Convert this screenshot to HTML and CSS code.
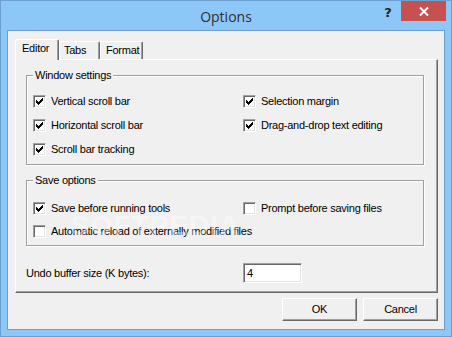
FILE: index.html
```html
<!DOCTYPE html>
<html>
<head>
<meta charset="utf-8">
<link rel="stylesheet" href="styles.css">
</head>
<body>
<div class="window">
  <div class="titlebar">
    <div class="spacer"></div>
    <div class="title">Options</div>
    <div class="controls">
      <div class="help">?</div>
      <div class="close">
        <svg width="10" height="9" viewBox="0 0 10 9"><path d="M1 0.5 L9 8.5 M9 0.5 L1 8.5" stroke="#fff" stroke-width="2" fill="none"/></svg>
      </div>
    </div>
  </div>
  <div class="client">
    <div class="tabs">
      <div class="tab active t-editor">Editor</div>
      <div class="tab t-tabs">Tabs</div>
      <div class="tab t-format">Format</div>
    </div>
    <div class="panel">
      <div class="group g1">
        <div class="group-label">Window settings</div>
        <div class="grid g1-grid">
          <div class="item"><span class="cb checked"><svg width="7" height="7" viewBox="0 0 7 7"><path d="M6 0h1v1h-1z M5 1h2v1h-2z M0 2h1v1h-1z M4 2h3v1h-3z M0 3h2v1h-2z M3 3h3v1h-3z M0 4h5v1h-5z M1 5h3v1h-3z M2 6h1v1h-1z" fill="#000"/></svg></span><span>Vertical scroll bar</span></div>
          <div class="item"><span class="cb checked"><svg width="7" height="7" viewBox="0 0 7 7"><path d="M6 0h1v1h-1z M5 1h2v1h-2z M0 2h1v1h-1z M4 2h3v1h-3z M0 3h2v1h-2z M3 3h3v1h-3z M0 4h5v1h-5z M1 5h3v1h-3z M2 6h1v1h-1z" fill="#000"/></svg></span><span>Selection margin</span></div>
          <div class="item"><span class="cb checked"><svg width="7" height="7" viewBox="0 0 7 7"><path d="M6 0h1v1h-1z M5 1h2v1h-2z M0 2h1v1h-1z M4 2h3v1h-3z M0 3h2v1h-2z M3 3h3v1h-3z M0 4h5v1h-5z M1 5h3v1h-3z M2 6h1v1h-1z" fill="#000"/></svg></span><span>Horizontal scroll bar</span></div>
          <div class="item"><span class="cb checked"><svg width="7" height="7" viewBox="0 0 7 7"><path d="M6 0h1v1h-1z M5 1h2v1h-2z M0 2h1v1h-1z M4 2h3v1h-3z M0 3h2v1h-2z M3 3h3v1h-3z M0 4h5v1h-5z M1 5h3v1h-3z M2 6h1v1h-1z" fill="#000"/></svg></span><span>Drag-and-drop text editing</span></div>
          <div class="item"><span class="cb checked"><svg width="7" height="7" viewBox="0 0 7 7"><path d="M6 0h1v1h-1z M5 1h2v1h-2z M0 2h1v1h-1z M4 2h3v1h-3z M0 3h2v1h-2z M3 3h3v1h-3z M0 4h5v1h-5z M1 5h3v1h-3z M2 6h1v1h-1z" fill="#000"/></svg></span><span>Scroll bar tracking</span></div>
        </div>
      </div>
      <div class="group g2">
        <div class="group-label">Save options</div>
        <div class="grid g2-grid">
          <div class="item"><span class="cb checked"><svg width="7" height="7" viewBox="0 0 7 7"><path d="M6 0h1v1h-1z M5 1h2v1h-2z M0 2h1v1h-1z M4 2h3v1h-3z M0 3h2v1h-2z M3 3h3v1h-3z M0 4h5v1h-5z M1 5h3v1h-3z M2 6h1v1h-1z" fill="#000"/></svg></span><span>Save before running tools</span></div>
          <div class="item"><span class="cb"></span><span>Prompt before saving files</span></div>
          <div class="item wide"><span class="cb"></span><span>Automatic reload of externally modified files</span></div>
        </div>
      </div>
      <div class="undo-row">
        <span class="undo-label">Undo buffer size (K bytes):</span>
        <div class="input">4</div>
      </div>
      <div class="watermark">SOFTPEDIA</div>
    </div>
    <div class="buttons">
      <div class="btn">OK</div>
      <div class="btn">Cancel</div>
    </div>
  </div>
</div>
</body>
</html>
```

FILE: styles.css
```css
* { box-sizing: border-box; }
html, body { margin: 0; padding: 0; }
body {
  font-family: "Liberation Sans", Arial, sans-serif;
  font-size: 11px;
  letter-spacing: -0.25px;
  color: #000;
  background: #8cc7f8;
}
.window {
  width: 452px;
  height: 337px;
  border: 1px solid #6d9fcf;
  background: #8cc7f8;
  display: flex;
  flex-direction: column;
}
.titlebar {
  height: 29px;
  display: grid;
  grid-template-columns: 76px 1fr 76px;
}
.title {
  display: flex;
  align-items: center;
  justify-content: center;
  font-family: "Open Sans", "Noto Sans", sans-serif;
  font-size: 14px;
  letter-spacing: 0;
  color: #303030;
  padding-top: 1px;
}
.controls {
  display: flex;
  align-items: flex-start;
}
.help {
  width: 26px;
  height: 20px;
  display: flex;
  align-items: center;
  justify-content: center;
  font-family: "DejaVu Sans", sans-serif;
  font-weight: bold;
  font-size: 13px;
  color: #222;
  padding-top: 3px;
}
.close {
  width: 45px;
  height: 20px;
  background: #c75050;
  display: flex;
  align-items: center;
  justify-content: center;
}
.client {
  margin: 0 6px;
  height: 300px;
  border: 1px solid #6f9ecd;
  background: #f0f0f0;
  padding: 8px 6px 0 7px;
  display: flex;
  flex-direction: column;
}
.tabs {
  height: 20px;
  display: flex;
  align-items: flex-end;
}
.tab {
  background: #f0f0f0;
  border-top: 1px solid #fff;
  border-left: 1px solid #fff;
  border-right: 1px solid #696969;
  box-shadow: inset -1px 0 0 #a0a0a0;
  border-radius: 2px 2px 0 0;
  line-height: 13px;
  padding-top: 2px;
}
.tab.active {
  height: 21px;
  margin-bottom: -1px;
  position: relative;
  z-index: 1;
}
.t-editor { width: 44px; padding-left: 6px; }
.t-tabs { width: 41px; height: 18px; padding-left: 4px; }
.t-format { width: 43px; height: 18px; padding-left: 5px; }
.panel {
  position: relative;
  width: 423px;
  height: 234px;
  border-top: 1px solid #fff;
  border-left: 1px solid #fff;
  border-right: 1px solid #696969;
  border-bottom: 1px solid #696969;
  box-shadow: inset -1px -1px 0 #a0a0a0;
  padding: 15px 13px 0 10px;
}
.group {
  border: 1px solid #a0a0a0;
  box-shadow: 1px 1px 0 #fff, inset 1px 1px 0 #fff;
}
.group-label {
  width: fit-content;
  margin: -7px 0 0 6px;
  padding: 0 2px;
  line-height: 13px;
  background: #f0f0f0;
}
.grid {
  display: grid;
  grid-template-columns: 210px 1fr;
  grid-auto-rows: 13px;
  padding-left: 6px;
}
.g1 { padding-bottom: 8px; }
.g1-grid { margin-top: 13px; row-gap: 11px; }
.g2 { margin-top: 15px; padding-bottom: 7px; }
.g2-grid { margin-top: 15px; row-gap: 10px; }
.item {
  display: flex;
  align-items: center;
  gap: 5px;
  line-height: 13px;
  white-space: nowrap;
}
.item.wide { grid-column: 1 / span 2; }
.cb {
  width: 13px;
  height: 13px;
  flex: none;
  background: #fff;
  border-top: 1px solid #a0a0a0;
  border-left: 1px solid #a0a0a0;
  border-bottom: 1px solid #fff;
  border-right: 1px solid #fff;
  box-shadow: inset 1px 1px 0 #696969, inset -1px -1px 0 #e3e3e3;
  display: flex;
  align-items: center;
  justify-content: center;
}
.cb svg { display: block; }
.undo-row {
  margin-top: 17px;
  display: flex;
  align-items: center;
  height: 20px;
}
.undo-label { width: 217px; }
.input {
  width: 59px;
  height: 20px;
  background: #fff;
  border-top: 1px solid #a0a0a0;
  border-left: 1px solid #a0a0a0;
  border-bottom: 1px solid #fff;
  border-right: 1px solid #fff;
  box-shadow: inset 1px 1px 0 #696969, inset -1px -1px 0 #e3e3e3;
  padding: 3px 0 0 3px;
  line-height: 13px;
}
.watermark {
  position: absolute;
  left: 55px;
  top: 150px;
  font-size: 28px;
  font-weight: bold;
  color: rgba(255, 255, 255, 0.4);
  letter-spacing: 1px;
  pointer-events: none;
}
.buttons {
  margin-top: 5px;
  display: flex;
  justify-content: flex-end;
  gap: 6px;
  width: 423px;
}
.btn {
  width: 75px;
  height: 23px;
  background: #f0f0f0;
  border-top: 1px solid #fff;
  border-left: 1px solid #fff;
  border-right: 1px solid #696969;
  border-bottom: 1px solid #696969;
  box-shadow: inset -1px -1px 0 #a0a0a0;
  display: flex;
  align-items: center;
  justify-content: center;
  line-height: 13px;
}
```
